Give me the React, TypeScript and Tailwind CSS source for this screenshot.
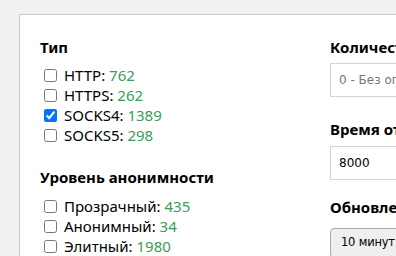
const types = [
  { label: 'HTTP', count: 762, checked: false },
  { label: 'HTTPS', count: 262, checked: false },
  { label: 'SOCKS4', count: 1389, checked: true },
  { label: 'SOCKS5', count: 298, checked: false },
];

const levels = [
  { label: 'Прозрачный', count: 435 },
  { label: 'Анонимный', count: 34 },
  { label: 'Элитный', count: 1980 },
];

function CheckRow({ label, count, checked }: { label: string; count: number; checked?: boolean }) {
  return (
    <label className="flex items-center h-5 text-[15px] text-black">
      <input
        type="checkbox"
        defaultChecked={checked}
        className="w-[13px] h-[13px] ml-1 mr-[7px] accent-[#0075ff]"
      />
      <span>
        {label}: <span className="text-[#3a9c5c]">{count}</span>
      </span>
    </label>
  );
}

export default function App() {
  return (
    <div className="w-[396px] h-[256px] overflow-hidden bg-[#f1f1f1] pl-[19px] pt-[14px] font-['Noto_Sans','Open_Sans',sans-serif]">
      <div className="w-[420px] h-[300px] bg-white border border-[#cbcbcb] flex pl-5 pt-[22px]">
        <div className="w-[290px] shrink-0">
          <h3 className="text-[15px] font-bold leading-5 text-black">Тип</h3>
          <div className="mt-2">
            {types.map((t) => (
              <CheckRow key={t.label} {...t} />
            ))}
          </div>
          <h3 className="mt-[22px] text-[15px] font-bold leading-5 text-black">Уровень анонимности</h3>
          <div className="mt-[9px]">
            {levels.map((l) => (
              <CheckRow key={l.label} {...l} />
            ))}
          </div>
        </div>
        <div className="flex-1">
          <h3 className="text-[15px] font-bold leading-5 text-black whitespace-nowrap">Количество прокси</h3>
          <input
            placeholder="0 - Без ограничений"
            className="mt-[6px] w-[200px] h-[34px] border border-[#d4d4d4] px-2 text-[12px] font-['DejaVu_Sans',sans-serif] placeholder:text-[#777]"
          />
          <h3 className="mt-[22px] text-[15px] font-bold leading-5 text-black whitespace-nowrap">Время отклика</h3>
          <input
            defaultValue="8000"
            className="mt-[7px] w-[200px] h-[34px] border border-[#d4d4d4] px-2 text-[12px] text-black font-['DejaVu_Sans',sans-serif]"
          />
          <h3 className="mt-[17px] text-[15px] font-bold leading-5 text-black whitespace-nowrap">Обновление</h3>
          <button className="mt-[11px] h-[30px] px-[10px] rounded-[4px] border border-[#a9a9a9] bg-[#efefef] text-[11.5px] tracking-[-0.2px] text-black font-['DejaVu_Sans',sans-serif]">
            10 минут
          </button>
        </div>
      </div>
    </div>
  );
}
